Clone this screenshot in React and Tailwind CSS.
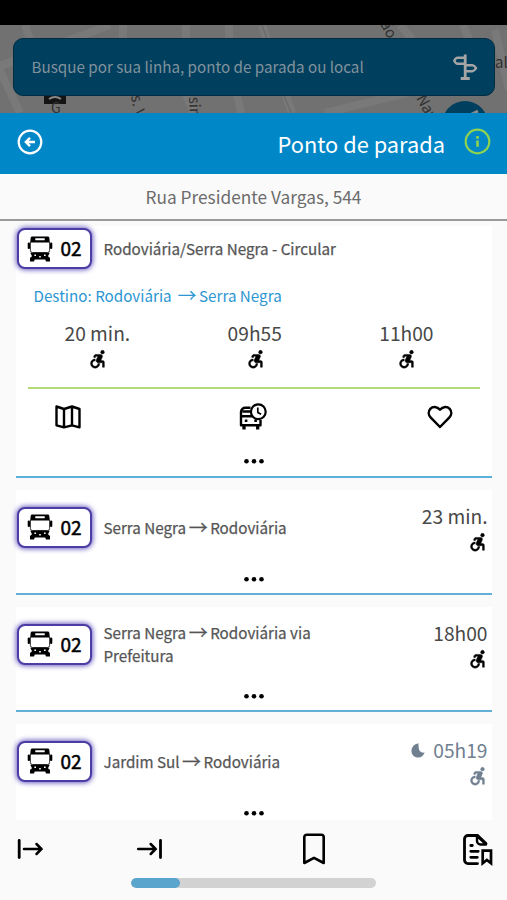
import { Fragment } from "react";

/* ─── Iconos SVG ────────────────────────────────────────────────── */
const IconBus = () => (
  <svg className="w-[26px] h-[26px] shrink-0" viewBox="0 0 26 26" fill="currentColor">
    <path fillRule="evenodd" d="M5.200.500h15.600a1.500 1.500 0 0 1 1.500 1.300l.5 4.700H3.200l.5-4.700A1.500 1.500 0 0 1 5.200.500zM8.300 2.200v2h9.400v-2z" />
    <path d="M3.400 6v8.500q0 2 2 2h15.200q2 0 2-2V6" fill="none" stroke="currentColor" strokeWidth="0.800" />
    <rect x="0.700" y="6.500" width="2.300" height="6.600" rx="1.100" />
    <rect x="23" y="6.500" width="2.300" height="6.600" rx="1.100" />
    <path fillRule="evenodd" d="M3.300 16.700h19.400l-1.700 3.600 2 1.600v3.700h-4l-.8-2.200H7.800L7 25.600H3v-3.700l2-1.600zM7.400 18.400v1.500H9v-1.500zM12.200 20v1.600h1.600V20zM17 18.400v1.500h1.600v-1.500z" />
  </svg>
);

const IconAcessivel = () => (
  <svg className="w-[22px] h-[22px]" viewBox="0 0 24 24" fill="currentColor" stroke="currentColor" strokeWidth="0.500">
    <circle cx="18" cy="4.540" r="2" />
    <path d="M15 17h-2c0 1.650-1.350 3-3 3s-3-1.350-3-3 1.350-3 3-3v-2c-2.760 0-5 2.240-5 5s2.240 5 5 5 5-2.240 5-5zm3-3.500h-1.860l1.670-3.670C18.420 8.500 17.440 7 15.960 7h-5.200c-.81 0-1.540.47-1.870 1.200L8.220 10l1.920.53.650-1.530H13l-1.830 4.100c-.6 1.330.39 2.900 1.850 2.900H18v5h2v-5.500c0-1.100-.9-2-2-2z" />
  </svg>
);

const IconLua = () => (
  <svg className="w-[14px] h-[15px]" viewBox="0 0 14 15" fill="currentColor">
    <path d="M7.600.3C3 1.200.5 4.300.5 8c0 3.900 3 6.600 6.600 6.600 3.200 0 5.600-1.900 6.500-5-3.400.600-5.900-1.700-5.900-5 0-1.600-.5-2.900-.1-4.300z" />
  </svg>
);

const IconVoltar = () => (
  <svg className="w-[26px] h-[26px]" viewBox="0 0 26 26" fill="none" stroke="currentColor" strokeWidth="2.200">
    <circle cx="13" cy="13" r="11.300" />
    <path d="M18 13H10M13 8.800 8.900 13l4.100 4.200" strokeWidth="2.500" />
  </svg>
);

const IconInfo = () => (
  <svg className="w-[27px] h-[27px]" viewBox="0 0 27 27" fill="none" stroke="currentColor" strokeWidth="2.200">
    <circle cx="13.500" cy="13.500" r="11.800" />
    <path d="M13.500 12.500v6.300M13.500 8v2.700" strokeWidth="2.600" />
  </svg>
);

const IconPlaca = () => (
  <svg className="w-[26px] h-[28px]" viewBox="0 0 26 28" fill="none" stroke="currentColor" strokeWidth="2.400" strokeLinejoin="round">
    <path d="M13.200 1.500v24M8.700 25.500h9" strokeWidth="2.800" />
    <path d="M13 4.800H5.500Q3.800 4.800 2.200 7.800 3.800 10.800 5.500 10.800H13M13 12.200h7.500q1.700 0 3.600 3-1.900 3-3.600 3H13" />
  </svg>
);

const IconMapa = () => (
  <svg className="w-[26px] h-[24px]" viewBox="0 0 26 24" fill="none" stroke="currentColor" strokeWidth="2.400" strokeLinejoin="round">
    <path d="M1.500 1.500 9 4l8-2.500L24.500 4v18.300L17 20.300l-8 2-7.500-2zM9 4v18.300M17 1.500v18.800" />
  </svg>
);

const IconHorario = () => (
  <svg className="w-[29px] h-[28px]" viewBox="0 0 29 28" fill="none" stroke="currentColor" strokeWidth="2.400" strokeLinejoin="round">
    <path d="M11.500 4.800H6.500A4.300 4.300 0 0 0 2 9v13.300h19.500v-5.200M2 13.300h11M3.500 8.500h8" />
    <path d="M5 22v4.500M18.700 22v4.500" strokeWidth="3.300" />
    <path d="M5.800 17.800h2.600M15.300 17.800h2.600" strokeWidth="2.600" />
    <circle cx="19.300" cy="8.800" r="7.400" strokeWidth="2.200" />
    <path d="M18.800 4.600v4.800l3.300 1.900" strokeWidth="1.700" />
  </svg>
);

const IconCoracao = () => (
  <svg className="w-[26px] h-[24px]" viewBox="0 0 26 24" fill="none" stroke="currentColor" strokeWidth="2.500" strokeLinejoin="round">
    <path d="M13 22 3.800 12.600C1.300 10 1 6.300 3.300 3.800c2.600-2.700 6.600-2.500 9.700.9 3.100-3.400 7.100-3.600 9.700-.9 2.300 2.500 2 6.200-.5 8.800z" />
  </svg>
);

const IconPartida = () => (
  <svg className="w-[27px] h-[20px]" viewBox="0 0 27 20" fill="none" stroke="currentColor" strokeWidth="2.500" strokeLinecap="round">
    <path d="M2.200 1.500v17" strokeWidth="2.800" />
    <path d="M7 10h17.500M19.500 5l5 5-5 5" />
  </svg>
);

const IconChegada = () => (
  <svg className="w-[27px] h-[20px]" viewBox="0 0 27 20" fill="none" stroke="currentColor" strokeWidth="2.500" strokeLinecap="round">
    <path d="M24.500 1.500v17" strokeWidth="2.800" />
    <path d="M2.200 10h17.500M14.700 5l5 5-5 5" />
  </svg>
);

const IconMarcador = () => (
  <svg className="w-[24px] h-[32px]" viewBox="0 0 24 32" fill="none" stroke="currentColor" strokeWidth="2.600" strokeLinejoin="round">
    <path d="M2.300 30V4.200a2.500 2.500 0 0 1 2.500-2.500h14.400a2.500 2.500 0 0 1 2.500 2.500V30L12 24.800z" />
  </svg>
);

const IconDocumento = () => (
  <svg className="w-[31px] h-[33px]" viewBox="0 0 31 33" fill="none" stroke="currentColor" strokeWidth="2.800">
    <path d="M15.500 30.600H6A3.500 3.500 0 0 1 2.500 27.100V6A3.500 3.500 0 0 1 6 2.500h9.500l8.500 8" strokeLinecap="round" />
    <path d="M15 3v5a3.500 3.500 0 0 0 3.500 3.500H24z" strokeWidth="2.400" strokeLinejoin="round" />
    <path d="M8.800 12.500h1.500M8.800 18.300h7.400M8.800 24.300h6.500" strokeLinecap="round" />
    <path d="M20.700 17.700h8.300v12.500l-4.150-3.200-4.150 3.200z" strokeWidth="2.700" />
  </svg>
);

const IconPontos = () => (
  <svg className="w-[20px] h-[6px]" viewBox="0 0 20 6" fill="currentColor">
    <circle cx="2.500" cy="3.300" r="2.300" />
    <circle cx="10" cy="3.300" r="2.300" />
    <circle cx="17.500" cy="3.300" r="2.300" />
  </svg>
);

/* ─── Mapa escurecido ao fundo ──────────────────────────────────── */
function MapaFundo() {
  return (
    <svg className="absolute inset-0 w-full h-full" viewBox="0 25 507 88">
      <g fill="none" stroke="#797979" strokeWidth="8">
        <path d="M25 25 42 75M-5 68 110 25M-5 60 20 113" />
        <path d="M123 25v15M186 25v15M229 25v15M237 94l4 19M186 94l8 19" />
        <path d="M262 25l30 88M400 25l12 14M463 25l6 14M495 30l14 60M325 113l90-22" />
      </g>
      <path d="M262 25l5 14M284 95l7 18" fill="none" stroke="#666" strokeWidth="1" />
      <rect x="44" y="90" width="22" height="14" fill="#141414" />
      <path d="M49 99q6-4 12 0" fill="none" stroke="#8a8a8a" strokeWidth="2" />
      <g fill="#303030" fontSize="15">
        <text x="51" y="113" fontSize="14">G</text>
        <text transform="translate(131 96) rotate(80)">s. V</text>
        <text transform="translate(189 97) rotate(88)">sin</text>
        <text transform="translate(380 24) rotate(62)">ão</text>
        <text transform="translate(416 98) rotate(62)">Nav</text>
        <text x="495" y="68">al</text>
      </g>
      <circle cx="465" cy="124" r="23" fill="#003f5e" />
      <path d="M470 115l8-4" stroke="#8a8a8a" strokeWidth="3" />
    </svg>
  );
}

/* Nome com a seta um pouco maior que o texto */
function Trajeto({ texto }) {
  return texto.split(" → ").map((parte, i) => (
    <Fragment key={parte}>
      {i > 0 && <span className="relative top-px mx-[2.500px] text-[19px] leading-none">→</span>}
      {parte}
    </Fragment>
  ));
}

/* ─── Placa da linha ────────────────────────────────────────────── */
function Placa({ numero }) {
  return (
    <div className="w-[75px] h-[41px] shrink-0 flex items-center pl-[8px] rounded-lg border-2 border-[#4b3da3] bg-white shadow-[0_0_5px_1px_#6c5fc0] text-black">
      <IconBus />
      <span className="ml-[8px] -mt-[2px] text-[19px] leading-none [-webkit-text-stroke:0.5px_#000]">{numero}</span>
    </div>
  );
}

function Horario({ hora, noturno }) {
  return (
    <div className={`flex flex-col items-end ${noturno ? "text-[#708090]" : "text-[#484848]"}`}>
      <div className="flex items-center h-[26px] text-[19.200px] leading-[26px] whitespace-nowrap">
        {noturno && <span className="mr-[8px]"><IconLua /></span>}
        {hora}
      </div>
      <span className={`mt-[2px] ${noturno ? "" : "text-black"}`}><IconAcessivel /></span>
    </div>
  );
}

function CartaoLinha({ numero, nome, hora, noturno, ultimo }) {
  return (
    <div className={`h-[105px] shrink-0 bg-white ${ultimo ? "" : "border-b-2 border-[#62b0d8]"}`}>
      <div className="flex items-start pl-[1px] pr-[4px] pt-[13px]">
        <div className="flex items-center h-[48px]">
          <Placa numero={numero} />
          <p className="ml-[12px] w-[230px] text-[15.200px] leading-[23px] text-[#555] [-webkit-text-stroke:0.25px_#555]">
            <Trajeto texto={nome} />
          </p>
        </div>
        <div className="ml-auto"><Horario hora={hora} noturno={noturno} /></div>
      </div>
      <div className="flex justify-center mt-[23px]"><IconPontos /></div>
    </div>
  );
}

const proximos = ["20 min.", "09h55", "11h00"];

const linhas = [
  { numero: "02", nome: "Serra Negra → Rodoviária", hora: "23 min." },
  { numero: "02", nome: "Serra Negra → Rodoviária via Prefeitura", hora: "18h00" },
  { numero: "02", nome: "Jardim Sul → Rodoviária", hora: "05h19", noturno: true },
];

export default function App() {
  return (
    <div className="w-[507px] h-[900px] flex flex-col overflow-hidden bg-[#fafafa] font-['Noto_Sans_CJK_SC',sans-serif]">
      <div className="h-[25px] shrink-0 bg-black" />
      <div className="relative h-[88px] shrink-0 overflow-hidden bg-[#717171] pl-[13px] pr-[12px] pt-[13px]">
        <MapaFundo />
        <div className="relative flex items-center justify-between h-[58px] rounded-[10px] border border-[#002c44] bg-[#003f5e] pl-[17.500px] pr-[16px]">
          <span className="-mt-[1px] text-[15.200px] text-[#80929c]">Busque por sua linha, ponto de parada ou local</span>
          <span className="text-[#a5a5a5]"><IconPlaca /></span>
        </div>
      </div>

      <header className="h-[61px] shrink-0 flex items-center bg-[#0087c8] text-white pl-[17px] pr-[16px]">
        <span className="-mt-1"><IconVoltar /></span>
        <h1 className="ml-auto mr-[19px] text-[21.800px] leading-none">Ponto de parada</h1>
        <span className="-mt-1 text-[#8fd350]"><IconInfo /></span>
      </header>
      <div className="h-[47px] shrink-0 flex items-center justify-center border-b-2 border-[#9a9a9a] text-[17.300px] text-[#6c6c6c]">
        Rua Presidente Vargas, 544
      </div>

      <main className="h-[599px] shrink-0 overflow-hidden flex flex-col gap-[12px] px-[15.500px] pt-[5px]">
        <section className="h-[252px] shrink-0 bg-white border-b-2 border-[#5bb0da]">
          <div className="flex items-center h-[45px] pl-[1px]">
            <Placa numero="02" />
            <p className="ml-[12px] text-[15.200px] text-[#555] [-webkit-text-stroke:0.25px_#555]">Rodoviária/Serra Negra - Circular</p>
          </div>
          <p className="mt-[12px] ml-[18px] text-[15.200px] leading-[24px] text-[#2b96d2]">
            Destino: Rodoviária&nbsp;<Trajeto texto=" → Serra Negra" />
          </p>
          <div className="flex justify-between pl-[49px] pr-[58px] mt-[13px]">
            {proximos.map((hora) => (
              <div key={hora} className="flex flex-col items-center text-[19.200px] leading-[26px] text-[#484848]">
                {hora}
                <span className="mt-[2px] text-black"><IconAcessivel /></span>
              </div>
            ))}
          </div>
          <div className="mx-[12px] mt-[17px] h-[2px] bg-[#b4da78]" />
          <div className="flex items-center justify-between h-[30px] mt-[13px] pl-[39px] pr-[39px] text-black">
            <IconMapa />
            <IconHorario />
            <IconCoracao />
          </div>
          <div className="flex justify-center mt-[26px]"><IconPontos /></div>
        </section>
        {linhas.map((l, i) => (
          <CartaoLinha key={l.nome} {...l} ultimo={i === linhas.length - 1} />
        ))}
      </main>

      <footer className="flex-1 flex flex-col text-black">
        <div className="flex items-center h-[58px] pl-[17px]">
          <IconPartida />
          <span className="ml-[92px]"><IconChegada /></span>
          <span className="ml-[139px]"><IconMarcador /></span>
          <span className="ml-[136px]"><IconDocumento /></span>
        </div>
        <div className="w-[245px] h-[10px] ml-[131px] rounded-full bg-[#d2d2d2] overflow-hidden">
          <div className="w-[49px] h-full rounded-full bg-[#5aa5cd]" />
        </div>
      </footer>
    </div>
  );
}
